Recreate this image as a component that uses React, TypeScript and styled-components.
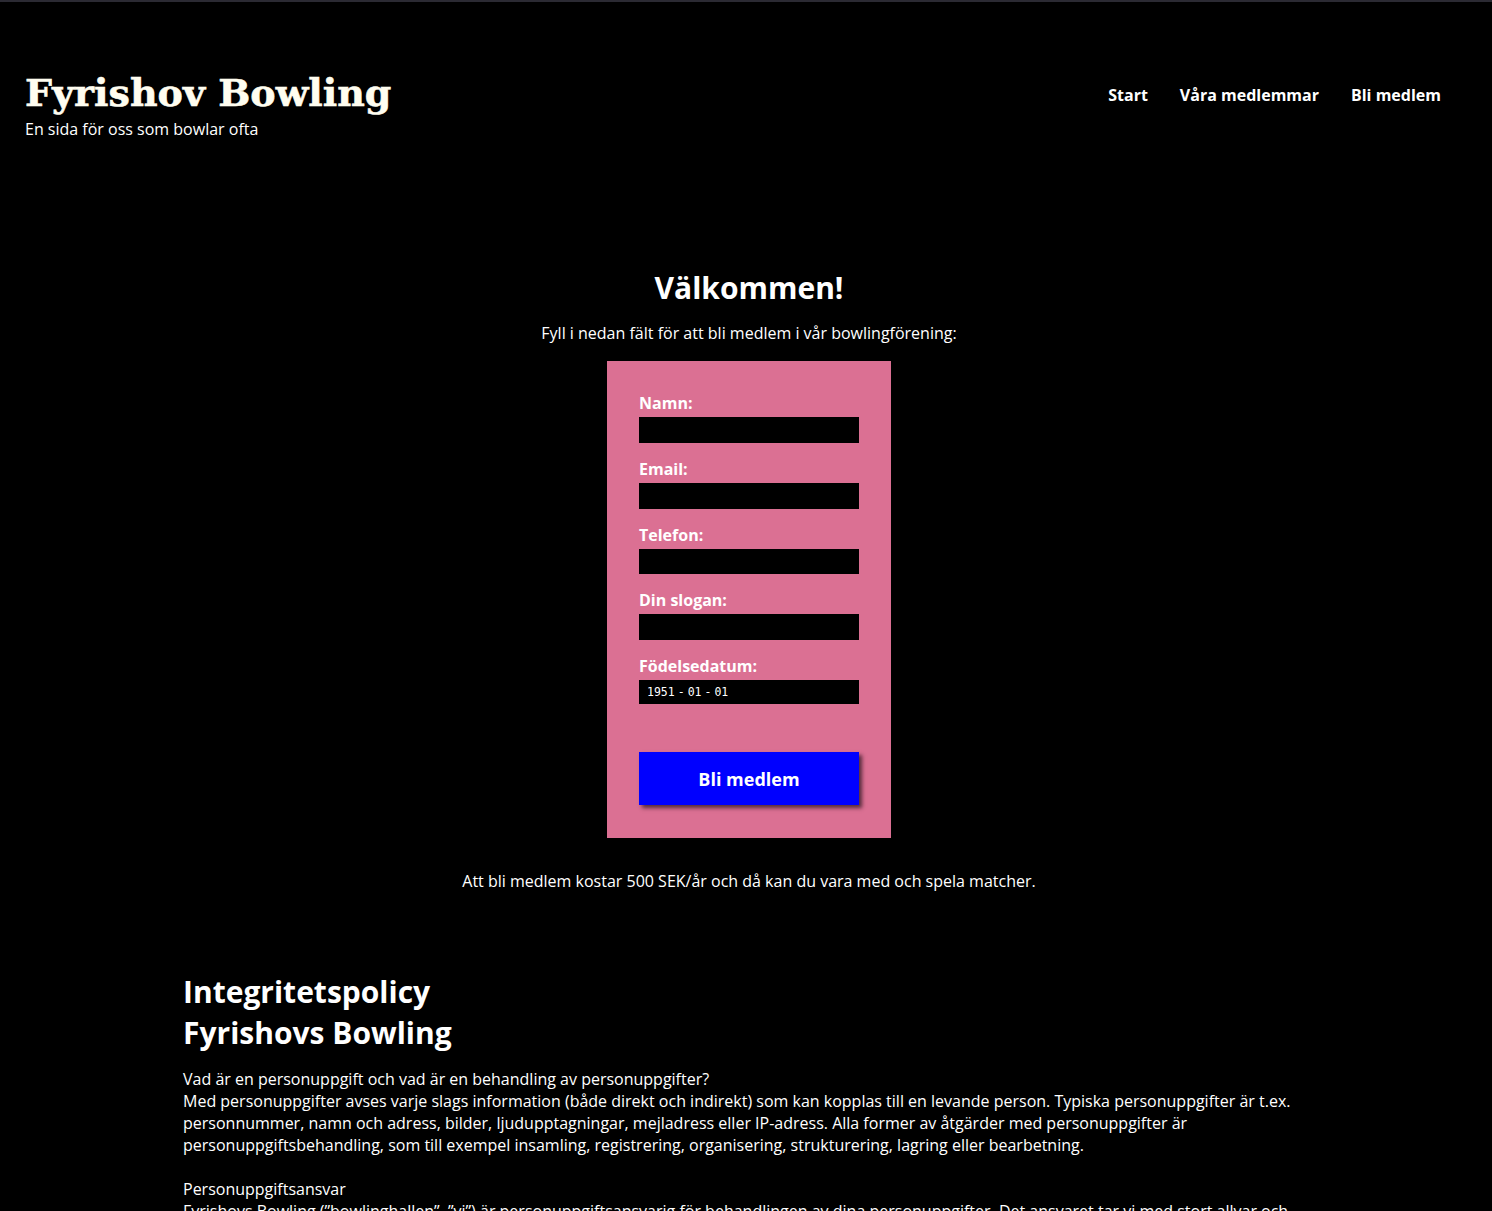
import React from "react";
import styled, { createGlobalStyle } from "styled-components";

const GlobalStyle = createGlobalStyle`
  html, body { margin: 0; padding: 0; background: #000; }
  body {
    color: #fff;
    font-family: "Open Sans", "Liberation Sans", sans-serif;
    font-size: 16px;
    border-top: 2px solid #2b2a33;
  }
  * { box-sizing: border-box; }
`;

const Header = styled.header`
  display: flex;
  justify-content: space-between;
  align-items: flex-start;
  padding: 66px 51px 0 25px;
`;

const Brand = styled.div`
  display: flex;
  flex-direction: column;
`;

const Title = styled.h1`
  margin: 0;
  font-family: "DejaVu Serif", "Liberation Serif", serif;
  font-weight: 700;
  font-size: 38px;
  line-height: 50px;
  color: #fffdf0;
  -webkit-text-stroke: 0.6px #fffdf0;
`;

const Tagline = styled.p`
  margin: 0;
  font-size: 16px;
  line-height: 22px;
`;

const Nav = styled.nav`
  display: flex;
  gap: 32px;
  padding-top: 15px;
`;

const NavLink = styled.a`
  color: #fff;
  font-weight: 700;
  font-size: 16px;
  text-decoration: none;
  line-height: 24px;
`;

const Main = styled.main`
  display: flex;
  flex-direction: column;
  align-items: center;
  padding: 128px 0 0 6px;
`;

const Welcome = styled.h2`
  margin: 0;
  font-size: 30px;
  line-height: 40px;
  font-weight: 700;
`;

const Lead = styled.p`
  margin: 14px 0 17px;
  font-size: 16px;
  line-height: 22px;
`;

const FormBox = styled.form`
  width: 284px;
  background: palevioletred;
  padding: 28px 32px 33px;
  display: flex;
  flex-direction: column;
`;

const Field = styled.label`
  display: flex;
  flex-direction: column;
  margin-bottom: 12px;
`;

const LabelText = styled.span`
  font-weight: 700;
  font-size: 16px;
  line-height: 28px;
  color: #fff;
`;

const Input = styled.input<{ $h?: number }>`
  width: 220px;
  height: ${(p) => p.$h ?? 26}px;
  background: #000;
  border: none;
  outline: none;
  color: #fff;
  padding: 0 8px;
`;

const DateBox = styled.div`
  width: 220px;
  height: 24px;
  background: #000;
  display: flex;
  align-items: center;
  gap: 3px;
  padding: 0 8px;
  font-family: "DejaVu Sans Mono", "Liberation Mono", monospace;
  font-size: 11.5px;
  color: #fff;
`;

const Submit = styled.button`
  margin-top: 36px;
  width: 220px;
  height: 53px;
  background: #0000ff;
  border: none;
  color: #fff;
  font-family: "Open Sans", sans-serif;
  font-weight: 700;
  font-size: 18px;
  box-shadow: 3px 3px 4px rgba(40, 20, 30, 0.75);
  cursor: pointer;
`;

const Note = styled.p`
  margin: 32px 0 0;
  font-size: 16px;
  line-height: 22px;
`;

const Policy = styled.section`
  width: 1126px;
  margin: 79px auto 0;
`;

const PolicyTitle = styled.h2`
  margin: 0 0 15px;
  font-size: 30px;
  line-height: 41px;
  font-weight: 700;
`;

const Para = styled.p`
  margin: 0 0 22px;
  font-size: 16px;
  line-height: 22px;
`;

export default function App() {
  return (
    <>
      <GlobalStyle />
      <Header>
        <Brand>
          <Title>Fyrishov Bowling</Title>
          <Tagline>En sida för oss som bowlar ofta</Tagline>
        </Brand>
        <Nav>
          <NavLink href="#">Start</NavLink>
          <NavLink href="#">Våra medlemmar</NavLink>
          <NavLink href="#">Bli medlem</NavLink>
        </Nav>
      </Header>
      <Main>
        <Welcome>Välkommen!</Welcome>
        <Lead>Fyll i nedan fält för att bli medlem i vår bowlingförening:</Lead>
        <FormBox onSubmit={(e) => e.preventDefault()}>
          <Field>
            <LabelText>Namn:</LabelText>
            <Input type="text" />
          </Field>
          <Field>
            <LabelText>Email:</LabelText>
            <Input type="email" />
          </Field>
          <Field>
            <LabelText>Telefon:</LabelText>
            <Input type="tel" $h={25} />
          </Field>
          <Field>
            <LabelText>Din slogan:</LabelText>
            <Input type="text" />
          </Field>
          <Field>
            <LabelText>Födelsedatum:</LabelText>
            <DateBox>
              <span>1951</span>
              <span>-</span>
              <span>01</span>
              <span>-</span>
              <span>01</span>
            </DateBox>
          </Field>
          <Submit type="submit">Bli medlem</Submit>
        </FormBox>
        <Note>Att bli medlem kostar 500 SEK/år och då kan du vara med och spela matcher.</Note>
      </Main>
      <Policy>
        <PolicyTitle>
          Integritetspolicy
          <br />
          Fyrishovs Bowling
        </PolicyTitle>
        <Para>
          Vad är en personuppgift och vad är en behandling av personuppgifter?
          <br />
          Med personuppgifter avses varje slags information (både direkt och indirekt) som kan kopplas till en levande person. Typiska personuppgifter är t.ex. personnummer, namn och adress, bilder, ljudupptagningar, mejladress eller IP-adress. Alla former av åtgärder med personuppgifter är personuppgiftsbehandling, som till exempel insamling, registrering, organisering, strukturering, lagring eller bearbetning.
        </Para>
        <Para>
          Personuppgiftsansvar
          <br />
          Fyrishovs Bowling (”bowlinghallen”, ”vi”) är personuppgiftsansvarig för behandlingen av dina personuppgifter. Det ansvaret tar vi med stort allvar och skyddar din integritet genom att alltid behandla dina personuppgifter på ett säkert sätt.
        </Para>
      </Policy>
    </>
  );
}
